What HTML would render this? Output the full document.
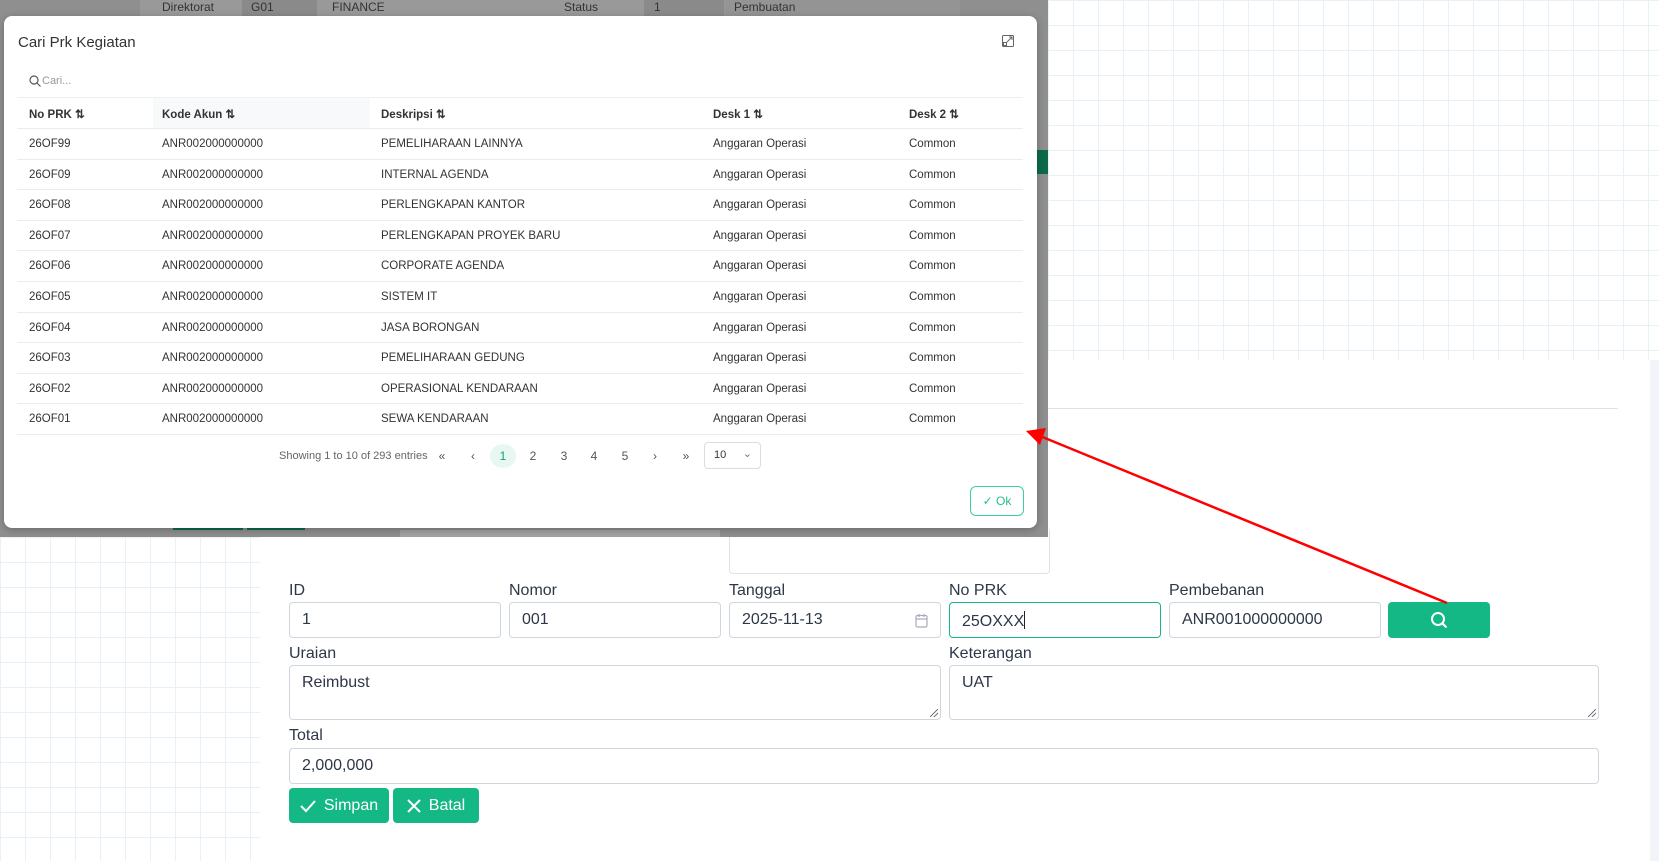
<!DOCTYPE html>
<html><head><meta charset="utf-8"><style>
*{box-sizing:border-box;margin:0;padding:0}
body{width:1659px;height:861px;position:relative;overflow:hidden;background:#fff;font-family:"Liberation Sans",sans-serif;color:#2d3748}
.grid{position:absolute;background-color:#fff;background-image:linear-gradient(#e8f1f8 1px,transparent 1px),linear-gradient(90deg,#e8f1f8 1px,transparent 1px);background-size:25px 25px}
.abs{position:absolute}
.lbl{position:absolute;font-size:16px;color:#2d3748}
.inp{position:absolute;height:36px;border:1px solid #cfd6de;border-radius:4px;background:#fff;font-size:16px;padding:8px 12px;color:#2d3748}
.btn{position:absolute;background:#14b884;border-radius:4px;color:#fff;font-size:16px;display:flex;align-items:center;justify-content:center;gap:8px}
.ov{position:absolute;left:0;top:0;width:1048px;height:537px;background:#8f8f8f}
.modal{position:absolute;left:4px;top:16px;width:1033px;height:512px;background:#fff;border-radius:8px;box-shadow:0 2px 8px rgba(0,0,0,.25)}
.th,.td{position:absolute;font-size:11.5px;color:#333}
.th{font-weight:bold}
.row{position:absolute;left:13px;width:1006px;border-bottom:1px solid #e9ecef;height:30.6px}
.pg{position:absolute;top:428px;width:26px;height:24px;font-size:12px;color:#555;text-align:center;line-height:24px;border-radius:50%}
.rh{position:absolute;right:2px;bottom:2px;width:8px;height:8px;background:linear-gradient(135deg,transparent 45%,#777 45%,#777 55%,transparent 55%,transparent 70%,#777 70%,#777 80%,transparent 80%)}
</style></head><body>
<div class="grid" style="left:1048px;top:0;width:611px;height:360px"></div>
<div class="grid" style="left:0;top:537px;width:260px;height:324px"></div>
<div class="abs" style="left:1048px;top:408px;width:570px;height:1px;background:#dee2e6"></div>
<div class="abs" style="left:1650px;top:360px;width:9px;height:501px;background:#f1f4f8"></div>
<div class="abs" style="left:729px;top:530px;width:321px;height:44px;border:1px solid #dde3ea;border-top:none;border-radius:0 0 4px 4px"></div>

<div class="lbl" style="left:289px;top:582px">ID</div>
<div class="lbl" style="left:509px;top:582px">Nomor</div>
<div class="lbl" style="left:729px;top:582px">Tanggal</div>
<div class="lbl" style="left:949px;top:582px">No PRK</div>
<div class="lbl" style="left:1169px;top:582px">Pembebanan</div>
<div class="inp" style="left:289px;top:602px;width:212px">1</div>
<div class="inp" style="left:509px;top:602px;width:212px">001</div>
<div class="inp" style="left:729px;top:602px;width:212px">2025-11-13<svg style="position:absolute;right:12px;top:10px" width="13" height="15" viewBox="0 0 13 15" fill="none" stroke="#aab" stroke-width="1.2"><rect x="1" y="2.5" width="11" height="11.5" rx="1.5"/><path d="M1 6h11M4 1v3M9 1v3"/></svg></div>
<div class="inp" style="left:949px;top:602px;width:212px;border-color:#14b884">25OXXX<span style="display:inline-block;width:1px;height:18px;background:#222;vertical-align:-3px"></span></div>
<div class="inp" style="left:1169px;top:602px;width:212px">ANR001000000000</div>
<div class="btn" style="left:1388px;top:602px;width:102px;height:36px"><svg width="18" height="18" viewBox="0 0 18 18" fill="none" stroke="#fff" stroke-width="2"><circle cx="8" cy="8" r="6"/><path d="M12.5 12.5l4 4"/></svg></div>
<div class="lbl" style="left:289px;top:645px">Uraian</div>
<div class="lbl" style="left:949px;top:645px">Keterangan</div>
<div class="inp" style="left:289px;top:665px;width:652px;height:55px">Reimbust<div class="rh"></div></div>
<div class="inp" style="left:949px;top:665px;width:650px;height:55px">UAT<div class="rh"></div></div>
<div class="lbl" style="left:289px;top:727px">Total</div>
<div class="inp" style="left:289px;top:748px;width:1310px">2,000,000</div>
<div class="btn" style="left:289px;top:788px;width:100px;height:35px"><svg width="16" height="14" viewBox="0 0 16 14" fill="none" stroke="#fff" stroke-width="2"><path d="M1 7l5 5 9-10"/></svg>Simpan</div>
<div class="btn" style="left:393px;top:788px;width:86px;height:35px"><svg width="14" height="14" viewBox="0 0 14 14" fill="none" stroke="#fff" stroke-width="2"><path d="M1 1l12 12M13 1L1 13"/></svg>Batal</div>

<div class="ov">
 <div class="abs" style="left:140px;top:0;width:820px;height:16px;background:#999"></div>
 <div class="abs" style="left:162px;top:0;font-size:12px;color:#333">Direktorat</div>
 <div class="abs" style="left:242px;top:0;width:75px;height:16px;background:#8a8a8a"></div>
 <div class="abs" style="left:251px;top:0;font-size:12px;color:#333">G01</div>
 <div class="abs" style="left:332px;top:0;font-size:12px;color:#333">FINANCE</div>
 <div class="abs" style="left:564px;top:0;font-size:12px;color:#333">Status</div>
 <div class="abs" style="left:644px;top:0;width:80px;height:16px;background:#8a8a8a"></div>
 <div class="abs" style="left:654px;top:0;font-size:12px;color:#333">1</div>
 <div class="abs" style="left:725px;top:0;width:235px;height:16px;background:#949494"></div>
 <div class="abs" style="left:734px;top:0;font-size:12px;color:#333">Pembuatan</div>
 <div class="abs" style="left:1037px;top:150px;width:11px;height:24px;background:#0b6b4b"></div>
 <div class="abs" style="left:173px;top:526px;width:70px;height:4px;background:#0b6b4b"></div>
 <div class="abs" style="left:247px;top:526px;width:58px;height:4px;background:#0b6b4b"></div>
 <div class="abs" style="left:400px;top:530px;width:320px;height:7px;background:#a3a3a3"></div>
</div>

<div class="modal">
 <div class="abs" style="left:14px;top:18px;font-size:15px;color:#333">Cari Prk Kegiatan</div>
 <svg class="abs" style="left:998px;top:19px" width="12" height="12" viewBox="0 0 12 12" fill="none" stroke="#666" stroke-width="1"><rect x="0.5" y="0.5" width="11" height="11" rx="1"/><rect x="1.5" y="7.5" width="3" height="3"/><path d="M5 7l5-5M7 2h3v3"/></svg>
 <svg class="abs" style="left:25px;top:59px" width="12" height="12" viewBox="0 0 12 12" fill="none" stroke="#555" stroke-width="1.2"><circle cx="5" cy="5" r="4"/><path d="M8 8l3.5 3.5"/></svg>
 <div class="abs" style="left:38px;top:59px;font-size:11px;color:#999">Cari...</div>
 <div class="abs" style="left:13px;top:81px;width:1006px;height:1px;background:#eef1f4"></div>
 <div class="abs" style="left:149px;top:82px;width:217px;height:31px;background:#f7f9fb"></div>
 <div class="row" style="top:82px;height:31px"></div>
 <div class="th" style="left:25px;top:91px">No PRK ⇅</div>
 <div class="th" style="left:158px;top:91px">Kode Akun ⇅</div>
 <div class="th" style="left:377px;top:91px">Deskripsi ⇅</div>
 <div class="th" style="left:709px;top:91px">Desk 1 ⇅</div>
 <div class="th" style="left:905px;top:91px">Desk 2 ⇅</div>
 <div id="rows"></div>
 <div class="abs" style="left:275px;top:428px;font-size:11px;color:#666;line-height:24px">Showing 1 to 10 of 293 entries</div>
 <div class="pg" style="left:425px">«</div>
 <div class="pg" style="left:456px">‹</div>
 <div class="pg" style="left:486px;background:#e6f8f1;color:#14a070">1</div>
 <div class="pg" style="left:516px">2</div>
 <div class="pg" style="left:547px">3</div>
 <div class="pg" style="left:577px">4</div>
 <div class="pg" style="left:608px">5</div>
 <div class="pg" style="left:638px">›</div>
 <div class="pg" style="left:669px">»</div>
 <div class="abs" style="left:700px;top:426px;width:57px;height:27px;border:1px solid #d7dde3;border-radius:4px;font-size:11px;color:#333;padding:6px 9px">10<span style="position:absolute;right:8px;top:4px;color:#777">⌄</span></div>
 <div class="abs" style="left:966px;top:470px;width:54px;height:30px;border:1px solid #3ccf9c;border-radius:6px;color:#25c08a;font-size:12px;display:flex;align-items:center;justify-content:center">✓ Ok</div>
</div>
<script>
var d=[["26OF99","PEMELIHARAAN LAINNYA"],["26OF09","INTERNAL AGENDA"],["26OF08","PERLENGKAPAN KANTOR"],["26OF07","PERLENGKAPAN PROYEK BARU"],["26OF06","CORPORATE AGENDA"],["26OF05","SISTEM IT"],["26OF04","JASA BORONGAN"],["26OF03","PEMELIHARAAN GEDUNG"],["26OF02","OPERASIONAL KENDARAAN"],["26OF01","SEWA KENDARAAN"]];
var h="";d.forEach(function(r,i){var t=113+i*30.6;h+='<div class="row" style="top:'+t+'px"></div>';var y=t+9;
h+='<div class="td" style="left:25px;top:'+y+'px">'+r[0]+'</div><div class="td" style="left:158px;top:'+y+'px">ANR002000000000</div><div class="td" style="left:377px;top:'+y+'px">'+r[1]+'</div><div class="td" style="left:709px;top:'+y+'px">Anggaran Operasi</div><div class="td" style="left:905px;top:'+y+'px">Common</div>';});
document.getElementById("rows").innerHTML=h;
</script>
<svg class="abs" style="left:0;top:0" width="1659" height="861"><line x1="1447" y1="603" x2="1040" y2="436" stroke="#f00" stroke-width="2.5"/><polygon points="1026,431 1046,428 1040,445" fill="#f00"/></svg>
</body></html>
